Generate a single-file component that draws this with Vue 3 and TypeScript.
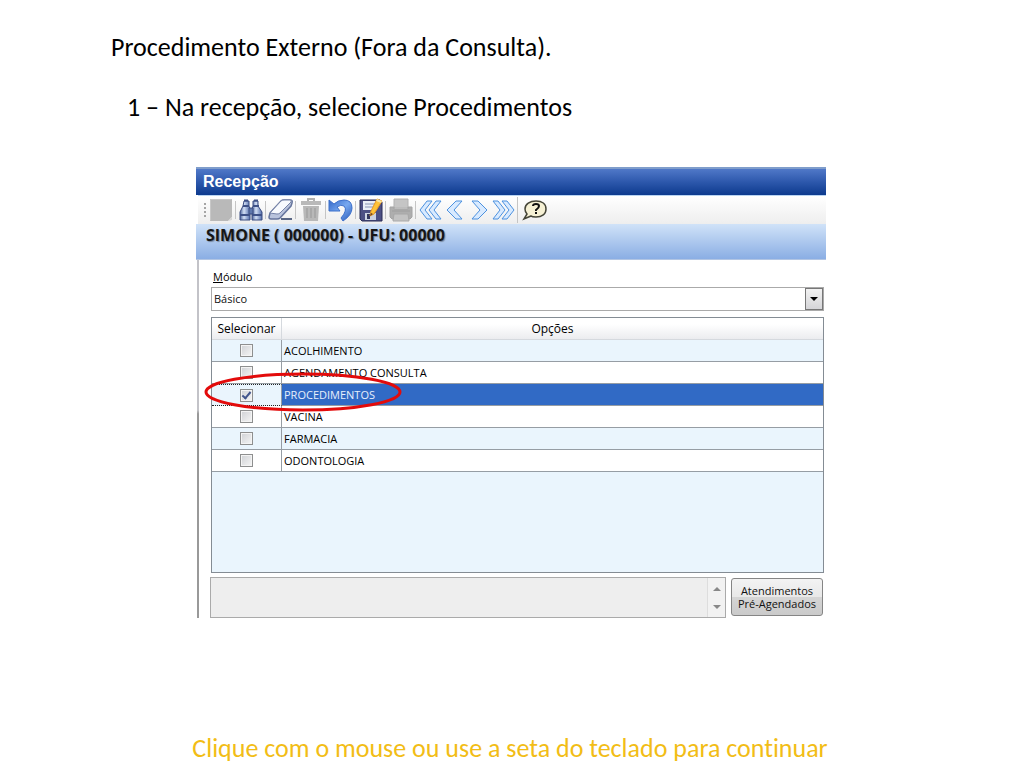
<script setup lang="ts">
import { ref } from 'vue'

interface Option {
  id: string
  label: string
  checked: boolean
}

const moduleName = ref('Básico')
const notes = ref('')
const options = ref<Option[]>([
  { id: 'acolhimento', label: 'ACOLHIMENTO', checked: false },
  { id: 'agendamento', label: 'AGENDAMENTO CONSULTA', checked: false },
  { id: 'procedimentos', label: 'PROCEDIMENTOS', checked: true },
  { id: 'vacina', label: 'VACINA', checked: false },
  { id: 'farmacia', label: 'FARMACIA', checked: false },
  { id: 'odontologia', label: 'ODONTOLOGIA', checked: false },
])
</script>

<template>
  <main class="slide">
    <header class="intro">
      <h1>Procedimento Externo (Fora da Consulta).</h1>
      <p>1 – Na recepção, selecione Procedimentos</p>
    </header>

    <section class="window">
      <h2 class="title">Recepção</h2>

      <div class="toolbar" role="toolbar">
        <span class="grip"></span>
        <button class="tool" type="button" aria-label="Novo" disabled>
          <svg width="24" height="24" viewBox="0 0 24 24">
            <path d="M1 1h22v18l-4 4H1z" fill="#b9b9b9" /><path d="M19 23l4-4v3z" fill="#d5d5d5" />
            <path d="M1.500 22.500V1.500h21" fill="none" stroke="#c8c8c8" />
          </svg>
        </button>
        <button class="tool" type="button" aria-label="Localizar">
          <svg width="24" height="24" viewBox="0 0 24 24">
            <defs>
              <linearGradient id="tube" x1="0" x2="1">
                <stop offset="0" stop-color="#4a619b" /><stop offset=".4" stop-color="#d3e0f5" /><stop offset="1" stop-color="#526cab" />
              </linearGradient>
            </defs>
            <path d="M5 3h5v5l1 3v11H1V14l3-6z" fill="url(#tube)" stroke="#3b4c80" />
            <path d="M14 3h5v5l4 6v8H13V11l1-3z" fill="url(#tube)" stroke="#3b4c80" />
            <path d="M10 10h4v6h-4z" fill="#5e77ac" stroke="#3b4c80" />
            <path d="M5 2.500h4M15 2.500h4M4 8h6M14 8h6M1 17h10M13 17h10" stroke="#3e5187" stroke-width="2" />
          </svg>
        </button>
        <button class="tool" type="button" aria-label="Limpar">
          <svg width="26" height="24" viewBox="0 0 26 24">
            <path d="M2 15L13 3q1-1 3-1h6q3 0 2 3l-1 3-11 12q-1 1-3 1H3q-2 0-2-2z" fill="#b9c3dc" stroke="#65749c" stroke-width="1.500" />
            <path d="M2 15L13 3q1-1 3-1h6q2 0 1 2L12 15q-1 1-3 1z" fill="#f8fafe" stroke="#7683a7" />
            <path d="M13 21h11" stroke="#596684" stroke-width="2" />
          </svg>
        </button>
        <button class="tool" type="button" aria-label="Excluir" disabled>
          <svg width="22" height="24" viewBox="0 0 22 24">
            <path d="M8 3V1h6v2" fill="none" stroke="#b0b0b0" stroke-width="2" />
            <path d="M1 3h20v4H1z" fill="#b9b9b9" /><path d="M3 8h16l-1 15H4z" fill="#b8b8b8" />
            <path d="M7 10v10M11 10v10M15 10v10" stroke="#a3a3a3" stroke-width="1.500" />
          </svg>
        </button>
        <button class="tool" type="button" aria-label="Desfazer">
          <svg width="26" height="24" viewBox="0 0 26 24">
            <defs>
              <linearGradient id="undo" x2="1" y2="1">
                <stop offset="0" stop-color="#3468c8" /><stop offset=".5" stop-color="#78a9f0" /><stop offset="1" stop-color="#2859b8" />
              </linearGradient>
            </defs>
            <path d="M1 2v11h11L9 9q4-3 7-1 4 4-3 12l2 3q9-6 9-13 0-8-8-8-6 0-10 4z" fill="url(#undo)" stroke="#3d70cb" />
          </svg>
        </button>
        <button class="tool" type="button" aria-label="Salvar">
          <svg width="24" height="24" viewBox="0 0 24 24">
            <path d="M1 2h20l2 2v19H3l-2-2z" fill="#4d5084" stroke="#292b55" />
            <path d="M4 3h14v9H4z" fill="#e9edf6" /><path d="M6 6h10M6 9h9" stroke="#8894b4" />
            <path d="M6 15h11v7H6z" fill="#ccd2e1" /><path d="M8 16h3v5H8z" fill="#34375f" />
            <path d="M18 1l5 2-8 13-4 2 1-5z" fill="#ffc238" stroke="#e99a24" />
            <path d="M18 1l5 2-1 2-5-2z" fill="#f6e4a4" /><path d="M12 15l2 1-3 2z" fill="#633e2c" />
          </svg>
        </button>
        <button class="tool" type="button" aria-label="Imprimir" disabled>
          <svg width="24" height="24" viewBox="0 0 24 24">
            <path d="M5 1h14v9H5z" fill="#c5c5c5" stroke="#b2b2b2" />
            <path d="M1 9h4v2h14V9h4v10l-2 2H3l-2-2z" fill="#aeaeae" stroke="#a4a4a4" />
            <path d="M5 16h14l1 7H4z" fill="#c3c3c3" stroke="#a8a8a8" />
            <path d="M3 13h18" stroke="#9e9e9e" />
          </svg>
        </button>
        <div class="nav">
          <button class="step" type="button" aria-label="Primeiro">
            <svg width="24" height="20" viewBox="0 0 24 20">
              <path d="M8 1h5L6 10l7 9H8L1 10zM17 1h5l-7 9 7 9h-5l-7-9z" class="chevron" />
            </svg>
          </button>
          <button class="step" type="button" aria-label="Anterior">
            <svg width="18" height="20" viewBox="0 0 18 20"><path d="M10 1h6L8 10l8 9h-6l-9-9z" class="chevron" /></svg>
          </button>
          <button class="step" type="button" aria-label="Próximo">
            <svg width="18" height="20" viewBox="0 0 18 20"><path d="M8 1H2l8 9-8 9h6l9-9z" class="chevron" /></svg>
          </button>
          <button class="step" type="button" aria-label="Último">
            <svg width="24" height="20" viewBox="0 0 24 20">
              <path d="M7 1H2l7 9-7 9h5l7-9zM16 1h-5l7 9-7 9h5l7-9z" class="chevron" />
            </svg>
          </button>
        </div>
        <button class="help" type="button" aria-label="Ajuda">
          <svg width="26" height="22" viewBox="0 0 26 22">
            <path d="M14 2c6 0 10 3 10 8s-4 8-10 8c-2 0-4 0-5-1l-7 3 3-5c-1-1-2-3-2-5 0-5 5-8 11-8z" fill="#f6f1d5" stroke="#454538" stroke-width="1.500" />
            <path d="M11 7q0-2 3-2t3 2q0 2-3 4v1" fill="none" stroke="#111" stroke-width="2" />
            <path d="M13 13h2v2h-2z" fill="#111" />
          </svg>
        </button>
      </div>

      <div class="patient">SIMONE ( 000000) - UFU: 00000</div>

      <div class="body">
        <label class="caption" for="module"><u>M</u>ódulo</label>
        <div class="combo">
          <select id="module" v-model="moduleName">
            <option>Básico</option>
          </select>
          <span class="drop"><svg width="8" height="4" viewBox="0 0 8 4"><path d="M0 0h8L4 4z" /></svg></span>
        </div>

        <div class="listing">
          <table>
            <thead>
              <tr><th class="pick">Selecionar</th><th>Opções</th></tr>
            </thead>
            <tbody>
              <tr v-for="option in options" :key="option.id" :class="{ selected: option.checked }">
                <td class="pick"><input :id="option.id" v-model="option.checked" type="checkbox" /></td>
                <td><label :for="option.id">{{ option.label }}</label></td>
              </tr>
            </tbody>
          </table>
          <svg class="marker" width="198" height="42" viewBox="0 0 198 42">
            <ellipse cx="99" cy="21" rx="97" ry="18" />
          </svg>
        </div>

        <div class="bottom">
          <div class="memo">
            <textarea v-model="notes" aria-label="Observações" readonly></textarea>
            <span class="scroll">
              <svg width="8" height="4" viewBox="0 0 8 4"><path d="M0 4h8L4 0z" /></svg>
              <svg width="8" height="4" viewBox="0 0 8 4"><path d="M0 0h8L4 4z" /></svg>
            </span>
          </div>
          <button class="scheduled" type="button">Atendimentos<br />Pré-Agendados</button>
        </div>
      </div>
    </section>

    <p class="hint">Clique com o mouse ou use a seta do teclado para continuar</p>
  </main>
</template>

<style>
body {
  margin: 0;
  background: #fff;
}
</style>

<style scoped>
.slide {
  box-sizing: border-box;
  min-height: 100vh;
  display: grid;
  grid-template-columns: 196fr 630fr 198fr;
  grid-template-rows: auto auto 1fr;
  font-family: Carlito, Lato, "Open Sans", sans-serif;
  font-variant-ligatures: none;
  color: #000;
}
.intro {
  grid-column: 1 / -1;
  padding: 32px 0 45px 111px;
  font-size: 26px;
  line-height: 30px;
}
.intro h1 {
  margin: 0 0 30px;
  font: inherit;
}
.intro p {
  margin: 0 0 0 16px;
}
.window {
  grid-column: 2;
  font-family: "Open Sans", sans-serif;
  font-size: 11px;
}
.title {
  box-sizing: border-box;
  height: 28px;
  margin: 0;
  padding-left: 7px;
  border-top: 2px solid #7f9dcb;
  background: linear-gradient(#5078c8, #2d58ac 50%, #0d3a8e);
  color: #fff;
  font: bold 16px/26px "Liberation Sans", Arial, sans-serif;
}
.toolbar {
  display: flex;
  align-items: center;
  height: 28px;
  padding-left: 6px;
  border-top: 1px solid #b9d4f2;
  margin-left: 2px;
  background: linear-gradient(#fff, #eee);
}
.grip {
  width: 2px;
  height: 14px;
  background: repeating-linear-gradient(#a5a5a5 0 2px, transparent 2px 4px);
}
.toolbar button {
  box-sizing: border-box;
  display: flex;
  align-items: center;
  justify-content: center;
  height: 26px;
  padding: 0;
  border: 0;
  background: none;
}
.toolbar svg {
  flex: none;
}
.toolbar .tool {
  width: 30px;
  position: relative;
}
.tool::after {
  content: "";
  position: absolute;
  right: 0;
  top: 4px;
  width: 1px;
  height: 18px;
  background: #c5c5c5;
}
.nav {
  display: flex;
  padding: 0 2px 0 3px;
  border-right: 1px solid #c5c5c5;
}
.toolbar .step {
  width: 24px;
}
.chevron {
  fill: #d8eaff;
  stroke: #4c91df;
  stroke-linejoin: round;
}
.toolbar .help {
  width: 34px;
}
.patient {
  box-sizing: border-box;
  height: 36px;
  padding-left: 10px;
  border-bottom: 1px solid #b2c5e3;
  background: linear-gradient(#d0e2f8, #8aaee4);
  color: #161616;
  font-size: 16px;
  font-weight: 700;
  line-height: 22px;
  text-shadow: 1px 1px 1px #77879f;
}
.body {
  margin-left: 1px;
  padding: 7px 2px 0 12px;
  border-left: 2px solid;
  border-image: linear-gradient(#c3c3c8 42%, #999 43%) 1;
}
.caption {
  display: block;
  padding-left: 2px;
  line-height: 20px;
}
.combo {
  display: flex;
  height: 24px;
  box-sizing: border-box;
  border: 1px solid #aaa;
}
.combo select {
  flex: 1;
  min-width: 0;
  padding: 0 2px 2px;
  border: 0;
  appearance: none;
  background: #fff;
  color: #111;
  font: inherit;
}
.drop {
  display: grid;
  place-items: center;
  width: 16px;
  border: 1px solid #777;
  background: linear-gradient(#f2f2f2, #d5d5d8);
}
.listing {
  position: relative;
  box-sizing: border-box;
  height: 256px;
  margin-top: 6px;
  border: 1px solid #848c94;
  background: #eaf5fd;
}
table {
  width: 100%;
  border-collapse: separate;
  border-spacing: 0;
  table-layout: fixed;
}
th,
td {
  box-sizing: border-box;
  height: 22px;
  padding: 0 2px;
  border-bottom: 1px solid #969da4;
  text-align: left;
  line-height: 20px;
}
th {
  border-color: #d5d9de;
  background: linear-gradient(#fff 30%, #ebecef);
  font-size: 12px;
  font-weight: 400;
  text-align: center;
}
.pick {
  width: 70px;
  border-right: 1px solid #969da4;
  text-align: center;
}
th.pick {
  padding: 0;
  border-right-color: #d5d9de;
}
tbody tr:nth-child(even) {
  background: #fff;
}
.selected td:last-child {
  background: #316ac5;
  color: #e7effc;
}
.selected .pick {
  border-top: 1px dotted #222;
  border-bottom: 1px dotted #222;
}
td input {
  display: inline-grid;
  place-items: center;
  box-sizing: border-box;
  width: 13px;
  height: 13px;
  margin: 0 0 2px;
  vertical-align: middle;
  appearance: none;
  border: 1px solid #8e8f8f;
  background: linear-gradient(135deg, #cfd1d5, #f6f6f6);
  box-shadow: inset 0 0 0 1px #f4f4f4;
}
td input:checked::after {
  content: "";
  width: 3px;
  height: 7px;
  margin-bottom: 2px;
  border: solid #42558c;
  border-width: 0 2px 2px 0;
  transform: rotate(40deg);
}
.marker {
  position: absolute;
  left: -8px;
  top: 53px;
  pointer-events: none;
}
.marker ellipse {
  fill: none;
  stroke: #e30b0b;
  stroke-width: 3;
}
.bottom {
  display: flex;
  gap: 5px;
  margin-top: 4px;
}
.memo {
  flex: 1;
  display: flex;
  box-sizing: border-box;
  height: 41px;
  margin-left: -1px;
  border: 1px solid #aaa;
  background: #eee;
}
.memo textarea {
  flex: 1;
  min-width: 0;
  padding: 2px;
  border: 0;
  resize: none;
  background: transparent;
  font: inherit;
}
.scroll {
  display: flex;
  flex-direction: column;
  align-items: center;
  justify-content: space-between;
  width: 18px;
  padding: 9px 0 8px;
  border-left: 1px solid #ddd;
  background: #f2f2f2;
  box-sizing: border-box;
  fill: #888;
}
.scheduled {
  width: 92px;
  height: 38px;
  margin: 1px 1px 0 0;
  padding: 0;
  border: 1px solid #858585;
  border-radius: 3px;
  background: linear-gradient(#f3f3f3, #e8e8e8 50%, #d5d5d5 51%, #cacaca);
  color: #111;
  font: inherit;
  line-height: 13px;
}
.hint {
  grid-column: 1 / -1;
  align-self: end;
  margin: 0;
  padding: 0 4px 5px 0;
  color: #f2bd16;
  font-size: 26px;
  line-height: 30px;
  text-align: center;
}
</style>
